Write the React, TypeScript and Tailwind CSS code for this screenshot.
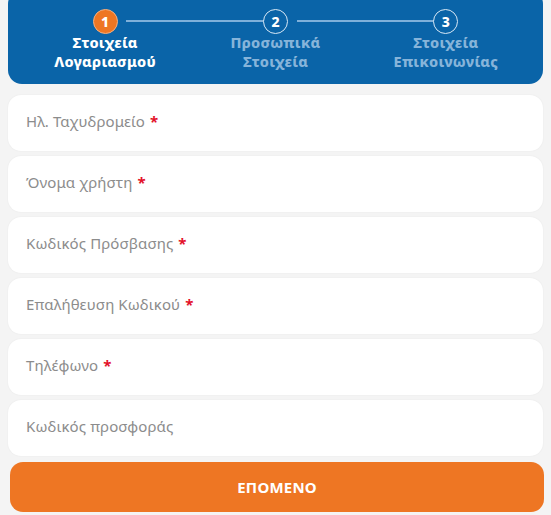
import React from "react";

const font = { fontFamily: '"Noto Sans", "Open Sans", sans-serif' };

function Step({ n, lines, active }: { n: number; lines: string[]; active?: boolean }) {
  return (
    <div className="flex flex-col items-center">
      <div
        className={
          active
            ? "w-[25px] h-[25px] rounded-full bg-[#ee7623] border-[1.5px] border-[#f6b080] flex items-center justify-center text-white text-[14px] font-extrabold leading-none relative z-10"
            : "w-[25px] h-[25px] rounded-full bg-[#0a64a8] border-[1.5px] border-[#d8e8f5] flex items-center justify-center text-white text-[14px] font-extrabold leading-none relative z-10"
        }
      >
        {n}
      </div>
      <div
        className={
          (active ? "text-white" : "text-[#86b4da]") +
          " mt-[-1px] text-[14.5px] font-extrabold leading-[19px] text-center tracking-[0.3px]"
        }
      >
        {lines.map((l) => (
          <div key={l}>{l}</div>
        ))}
      </div>
    </div>
  );
}

function Field({ label, required = true }: { label: string; required?: boolean }) {
  return (
    <div className="h-[56px] bg-white rounded-[13px] shadow-[0_0_2px_rgba(0,0,0,0.06)] flex items-center pl-[18px] pb-[3px]">
      <span className="text-[15px] text-[#8c8c8c] tracking-[0.1px]">
        {label}
        {required && <span className="text-[#e3122a] font-bold ml-[5px]">*</span>}
      </span>
    </div>
  );
}

export default function App() {
  return (
    <div className="w-[551px] h-[515px] bg-[#f4f4f4] overflow-hidden" style={font}>
      <div className="mx-[8px] mt-[-10px] h-[94px] bg-[#0a64a8] rounded-[14px] relative px-[12px] pt-[19px]">
        <div className="absolute top-[30px] left-[118px] w-[146px] h-[2px] bg-[#7fb0da]" />
        <div className="absolute top-[30px] left-[289px] w-[146px] h-[2px] bg-[#7fb0da]" />
        <div className="grid grid-cols-3">
          <Step n={1} lines={["Στοιχεία", "Λογαριασμού"]} active />
          <Step n={2} lines={["Προσωπικά", "Στοιχεία"]} />
          <Step n={3} lines={["Στοιχεία", "Επικοινωνίας"]} />
        </div>
      </div>
      <div className="mx-[8px] mt-[11px] flex flex-col gap-[5px]">
        <Field label="Ηλ. Ταχυδρομείο" />
        <Field label="Όνομα χρήστη" />
        <Field label="Κωδικός Πρόσβασης" />
        <Field label="Επαλήθευση Κωδικού" />
        <Field label="Τηλέφωνο" />
        <Field label="Κωδικός προσφοράς" required={false} />
      </div>
      <div className="ml-[10px] mr-[7px] mt-[6px] h-[50px] rounded-[13px] bg-[#ee7623] flex items-center justify-center">
        <span className="text-white text-[15px] font-bold tracking-[0.2px]">ΕΠΟΜΕΝΟ</span>
      </div>
    </div>
  );
}
